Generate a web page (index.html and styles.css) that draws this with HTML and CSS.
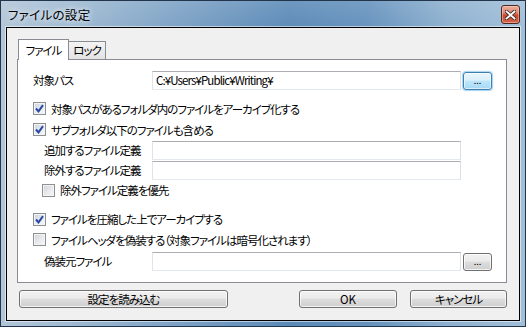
FILE: index.html
```html
<!DOCTYPE html>
<html lang="ja">
<head>
<meta charset="utf-8">
<title>ファイルの設定</title>
<link rel="stylesheet" href="styles.css">
</head>
<body>
<div class="window">
  <div class="titlebar">
    <span class="title">ファイルの設定</span>
    <div class="close">
      <svg width="11" height="10" viewBox="0 0 11 10"><path d="M1.5 1.5 L9.5 8.5 M9.5 1.5 L1.5 8.5" stroke="#3a2a28" stroke-width="3.6" stroke-linecap="square"/><path d="M1.5 1.5 L9.5 8.5 M9.5 1.5 L1.5 8.5" stroke="#fff" stroke-width="1.8" stroke-linecap="square"/></svg>
    </div>
  </div>
  <div class="client">
    <div class="tabs">
      <div class="tab active">ファイル</div>
      <div class="tab">ロック</div>
    </div>
    <div class="panel">
      <div class="field first">
        <span class="lbl">対象パス</span>
        <div class="input path">C:¥Users¥Public¥Writing¥</div>
        <button class="btn browse focus">...</button>
      </div>
      <div class="check gap8">
        <span class="cb on"><svg width="9" height="9" viewBox="0 0 9 9"><path d="M1 4.5 L3.5 7.3 L8 1.2" fill="none" stroke="#2b47a0" stroke-width="2"/></svg></span>
        <span>対象パスがあるフォルダ内のファイルをアーカイブ化する</span>
      </div>
      <div class="check">
        <span class="cb on"><svg width="9" height="9" viewBox="0 0 9 9"><path d="M1 4.5 L3.5 7.3 L8 1.2" fill="none" stroke="#2b47a0" stroke-width="2"/></svg></span>
        <span>サブフォルダ以下のファイルも含める</span>
      </div>
      <div class="field sub gap1">
        <span class="lbl">追加するファイル定義</span>
        <div class="input"></div>
      </div>
      <div class="field sub gap1">
        <span class="lbl">除外するファイル定義</span>
        <div class="input"></div>
      </div>
      <div class="check sub short">
        <span class="cb"></span>
        <span>除外ファイル定義を優先</span>
      </div>
      <div class="check gap9 short">
        <span class="cb on"><svg width="9" height="9" viewBox="0 0 9 9"><path d="M1 4.5 L3.5 7.3 L8 1.2" fill="none" stroke="#2b47a0" stroke-width="2"/></svg></span>
        <span>ファイルを圧縮した上でアーカイブする</span>
      </div>
      <div class="check">
        <span class="cb"></span>
        <span>ファイルヘッダを偽装する（対象ファイルは暗号化されます）</span>
      </div>
      <div class="field sub gap2">
        <span class="lbl">偽装元ファイル</span>
        <div class="input"></div>
        <button class="btn browse">...</button>
      </div>
    </div>
    <div class="footer">
      <button class="btn load">設定を読み込む</button>
      <span class="spacer"></span>
      <button class="btn ok">OK</button>
      <button class="btn cancel">キャンセル</button>
    </div>
  </div>
</div>
</body>
</html>
```

FILE: styles.css
```css
* { box-sizing: border-box; }
html, body { margin: 0; padding: 0; }
body {
  width: 526px;
  height: 327px;
  overflow: hidden;
  font-family: "Noto Sans CJK JP", "Noto Sans", sans-serif;
  font-size: 11.5px;
  font-feature-settings: "palt";
  letter-spacing: -1px;
  color: #000;
  background: #6f9bc4;
}
.window {
  width: 526px;
  height: 327px;
  border: 1px solid #22354a;
  background:
    linear-gradient(180deg, rgba(255,255,255,0.12), rgba(255,255,255,0) 30px),
    linear-gradient(90deg, #b2c6d8 0%, #9cb8d1 15%, #7aa0c4 35%, #5b8ab7 55%, #6592bd 70%, #8db0cf 85%, #a2bfd8 100%);
  display: flex;
  flex-direction: column;
}
.titlebar {
  height: 26px;
  display: flex;
  align-items: flex-start;
  justify-content: space-between;
  padding: 0 5px 0 7px;
}
.title {
  line-height: 27px;
  font-size: 12.5px;
  letter-spacing: 0.3px;
  text-shadow: 0 0 5px rgba(255,255,255,0.9), 0 0 9px rgba(255,255,255,0.6);
}
.close {
  width: 19px;
  height: 19px;
  margin-top: 4px;
  border: 1px solid #50261d;
  border-radius: 3px;
  background: linear-gradient(180deg, #eab1a1 0%, #dc8770 40%, #c9482c 55%, #d2664a 100%);
  box-shadow: inset 0 0 0 1px rgba(255,220,210,0.45);
  display: flex;
  align-items: center;
  justify-content: center;
}
.client {
  flex: 1;
  margin: 0 5px 5px;
  border: 1px solid #000;
  box-shadow: 0 0 0 1px rgba(255,255,255,0.55);
  background: #f0f0f0;
  padding: 11px 0 0 10px;
  display: flex;
  flex-direction: column;
}
.tabs {
  display: flex;
  align-items: flex-end;
  height: 20px;
  margin-left: 1px;
  position: relative;
  z-index: 1;
}
.tab {
  height: 18px;
  width: 38px;
  border: 1px solid #898c95;
  border-bottom: none;
  padding: 0;
  text-align: center;
  white-space: nowrap;
  line-height: 17px;
  background: linear-gradient(180deg, #f3f3f3, #e3e3e3);
  margin-left: -1px;
}
.tab.active {
  height: 21px;
  width: 51px;
  margin-bottom: -1px;
  margin-left: 0;
  background: #fff;
  line-height: 20px;
  position: relative;
  z-index: 2;
}
.panel {
  width: 490px;
  height: 224px;
  border: 1px solid #898c95;
  background: #fff;
  padding: 0 14px 0 15px;
  display: flex;
  flex-direction: column;
}
.field {
  display: flex;
  align-items: center;
  height: 19px;
}
.field.first { margin-top: 11px; }
.lbl {
  width: 119px;
  flex: none;
  line-height: 19px;
  white-space: nowrap;
}
.field.sub .lbl { padding-left: 11px; }
.input {
  width: 309px;
  height: 19px;
  flex: none;
  border: 1px solid;
  border-color: #abadb3 #dbdfe6 #e3e9ef #e2e3ea;
  background: #fff;
  padding-left: 3px;
  line-height: 17px;
  white-space: nowrap;
  overflow: hidden;
}
.input.path { letter-spacing: -0.9px; }
.btn {
  font: inherit;
  font-feature-settings: "palt";
  letter-spacing: -1px;
  color: #000;
  height: 18px;
  padding: 0;
  border: 1px solid #707070;
  border-radius: 3px;
  background: linear-gradient(180deg, #f2f2f2 0%, #ebebeb 45%, #dddddd 50%, #cfcfcf 100%);
  box-shadow: inset 0 0 0 1px rgba(255,255,255,0.75);
  line-height: 15px;
}
.browse {
  width: 29px;
  margin-left: 2px;
  margin-top: 1px;
  font-size: 9px;
  letter-spacing: 0;
  line-height: 14px;
}
.browse.focus {
  border-color: #3c7fb1;
  background: linear-gradient(180deg, #eaf6fd 0%, #d9f0fc 45%, #bee6fd 50%, #a7d9f5 100%);
  box-shadow: inset 0 0 0 1px rgba(255,255,255,0.6), 0 0 1px 1px rgba(80,170,230,0.5);
}
.check {
  display: flex;
  align-items: center;
  height: 21px;
  gap: 5px;
  white-space: nowrap;
}
.check.short { height: 20px; }
.check.sub { padding-left: 9px; }
.gap8 { margin-top: 8px; }
.gap9 { margin-top: 9px; }
.gap1 { margin-top: 1px; }
.gap2 { margin-top: 2px; }
.cb {
  width: 13px;
  height: 13px;
  flex: none;
  border: 1px solid #8e8f8f;
  background: linear-gradient(135deg, #cdd1d7 0%, #e6e8eb 50%, #f8f8f9 100%);
  box-shadow: inset 0 0 0 1px #f4f4f4;
  display: flex;
  align-items: center;
  justify-content: center;
}
.cb.on {
  background: linear-gradient(135deg, #c9d2dc 0%, #e4e9ef 50%, #f7f9fb 100%);
}
.footer {
  display: flex;
  align-items: center;
  margin-top: 7px;
  padding-left: 2px;
  width: 490px;
}
.spacer { flex: 1; }
.load { width: 209px; }
.ok { width: 98px; letter-spacing: 0; }
.cancel { width: 97px; margin-left: 13px; }
```
